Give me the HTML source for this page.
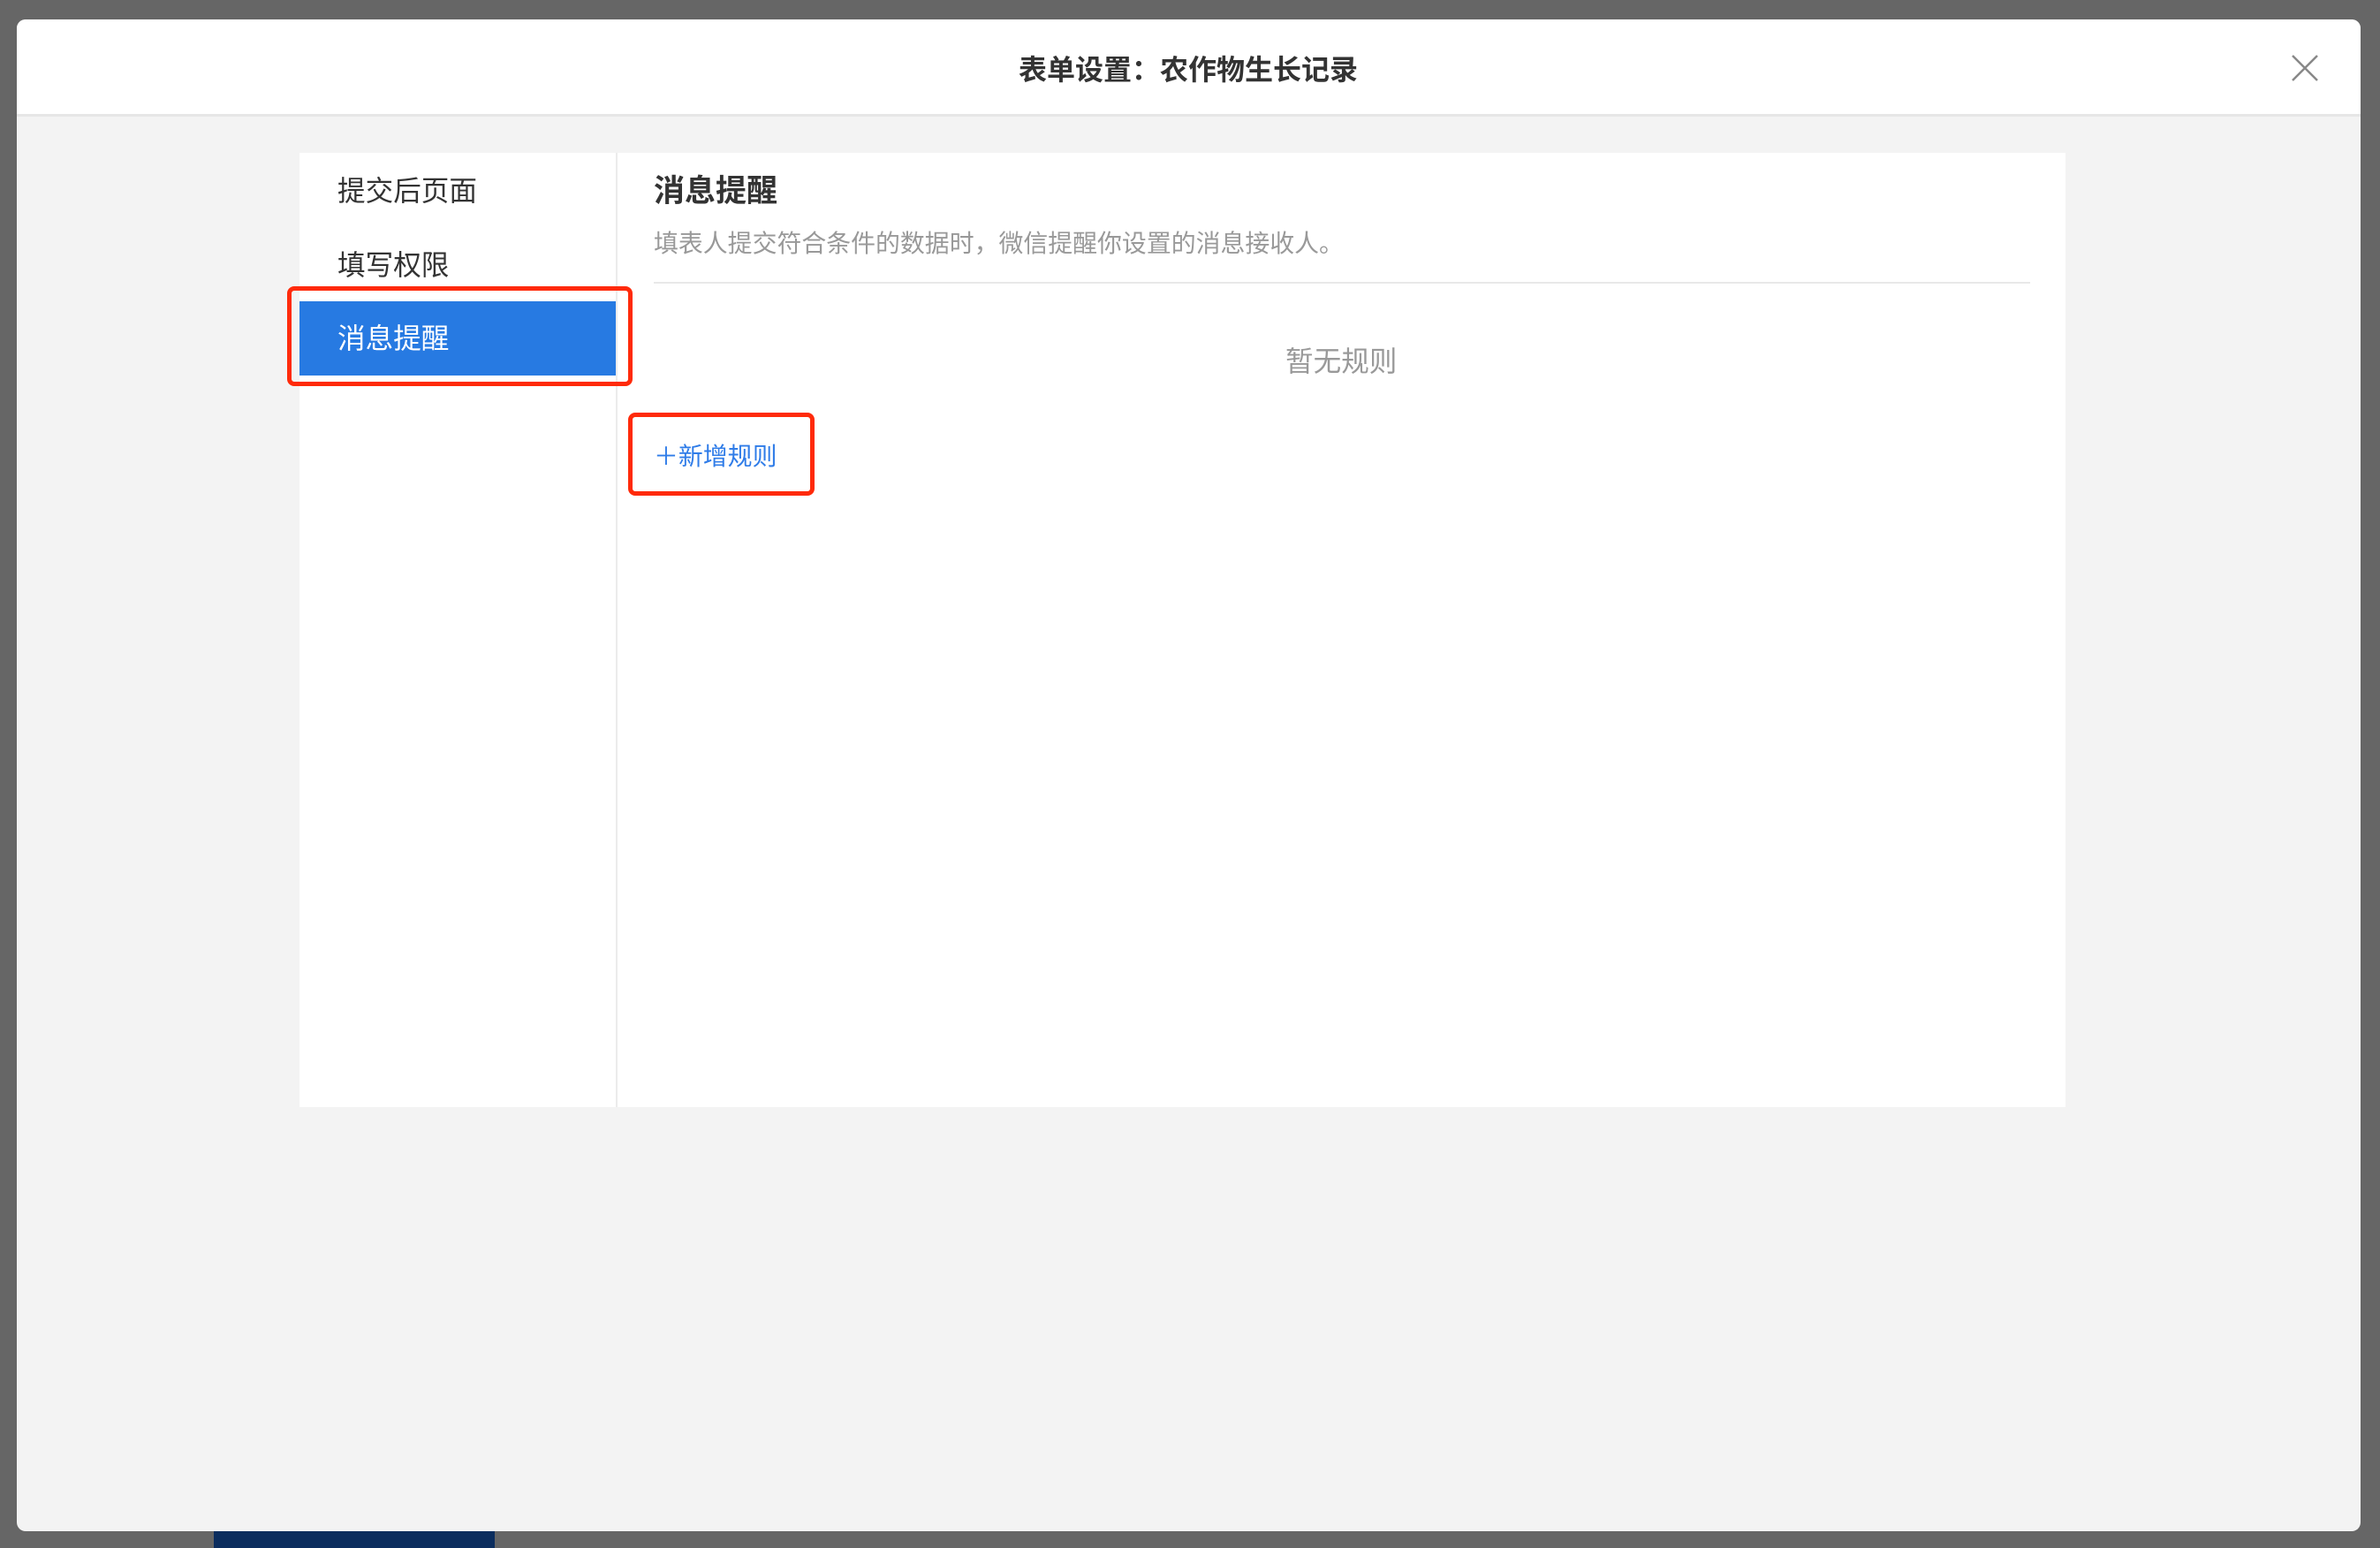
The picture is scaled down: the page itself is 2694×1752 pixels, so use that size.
<!DOCTYPE html>
<html><head><meta charset="utf-8"><style>
*{margin:0;padding:0;box-sizing:border-box}
body{width:2694px;height:1752px;background:#666;position:relative;overflow:hidden;font-family:"Liberation Sans","Noto Sans CJK SC",sans-serif}
.abs{position:absolute}
.modal{left:19px;top:22px;width:2653px;height:1711px;background:#f3f3f3;border-radius:10px;overflow:hidden}
.hdr{left:0;top:0;width:2653px;height:110px;background:#fff;border-bottom:3px solid #e6e6e6}
.t{white-space:nowrap;line-height:1}
</style></head><body>
<div class="abs" style="left:242px;top:1733px;width:318px;height:19px;background:#0b2d5e"></div>
<div class="abs modal">
  <div class="abs hdr"></div>
  <div class="abs t" style="left:1134px;top:41px;font-size:32px;font-weight:bold;color:#333">表单设置：农作物生长记录</div>
  <svg class="abs" style="left:2575px;top:40px" width="30" height="30" viewBox="0 0 30 30"><path d="M1 1L29 29M29 1L1 29" stroke="#888" stroke-width="2.5" fill="none"/></svg>
</div>
<div class="abs" style="left:339px;top:173px;width:1999px;height:1080px;background:#fff"></div>
<div class="abs" style="left:697px;top:173px;width:2px;height:1080px;background:#ececec"></div>
<div class="abs t" style="left:382px;top:201px;font-size:31.6px;color:#333">提交后页面</div>
<div class="abs t" style="left:382px;top:285px;font-size:31.6px;color:#333">填写权限</div>
<div class="abs" style="left:339px;top:341px;width:358px;height:84px;background:#277ae2"></div>
<div class="abs t" style="left:382px;top:368px;font-size:31.6px;color:#fff">消息提醒</div>
<div class="abs" style="left:325px;top:324px;width:391px;height:113px;border:5px solid #ff2a0a;border-radius:8px"></div>
<div class="abs t" style="left:740px;top:199px;font-size:35px;font-weight:bold;color:#333">消息提醒</div>
<div class="abs t" style="left:740px;top:262px;font-size:27.9px;color:#999">填表人提交符合条件的数据时，微信提醒你设置的消息接收人。</div>
<div class="abs" style="left:740px;top:319px;width:1558px;height:2px;background:#e8e8e8"></div>
<div class="abs t" style="left:1455px;top:394px;font-size:31.6px;color:#999">暂无规则</div>
<div class="abs t" style="left:740px;top:503px;font-size:27.9px;color:#2f7ce8">＋新增规则</div>
<div class="abs" style="left:711px;top:467px;width:211px;height:94px;border:5px solid #ff2a0a;border-radius:8px"></div>
</body></html>
